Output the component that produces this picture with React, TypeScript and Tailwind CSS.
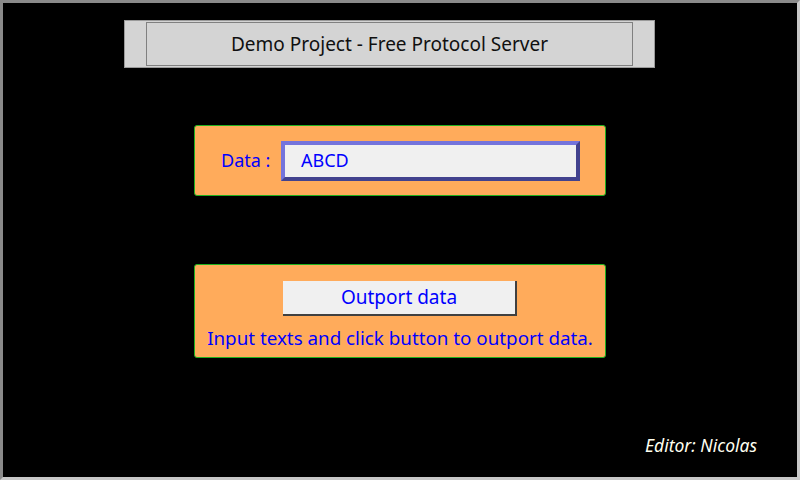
import React from "react";

export default function App() {
  const font = { fontFamily: '"Comic Sans MS", "Noto Sans", "DejaVu Sans", sans-serif' };
  return (
    <div
      className="w-[800px] h-[480px] bg-black flex flex-col border-[3px] border-t-[#8a8a8a] border-l-[#8a8a8a] border-b-[#c8c8c8] border-r-[#c8c8c8] box-border"
      style={font}
    >
      <div className="ml-[121px] mt-[17px] w-[531px] h-[48px] bg-[#d4d4d4] border border-[#9a9a9a] flex items-center justify-center">
        <div className="w-[487px] h-[44px] border border-[#808080] flex items-center justify-center text-[19px] text-[#101010]">
          Demo Project - Free Protocol Server
        </div>
      </div>

      <div className="ml-[191px] mt-[57px] w-[412px] h-[71px] bg-[#ffab5b] border border-[#1fb01f] rounded-[3px] flex items-center">
        <span className="ml-[26px] w-[60px] text-[18px] text-[#0000ff]">Data :</span>
        <div className="w-[299px] h-[40px] bg-[#f0f0f0] border-[4px] border-t-[#7474dc] border-l-[#7474dc] border-b-[#42428e] border-r-[#42428e] flex items-center">
          <span className="ml-[16px] text-[18px] text-[#0000ff]">ABCD</span>
        </div>
      </div>

      <div className="ml-[191px] mt-[68px] w-[412px] h-[94px] bg-[#ffab5b] border border-[#1fb01f] rounded-[3px] flex flex-col items-center">
        <div className="mt-[16px] w-[234px] h-[35px] bg-[#f0f0f0] border-r-2 border-b-2 border-[#404040] flex items-center justify-center text-[19px] text-[#0000ff]">
          Outport data
        </div>
        <div className="mt-[8px] text-[18.8px] text-[#0000ff] whitespace-nowrap">
          Input texts and click button to outport data.
        </div>
      </div>

      <div className="mt-auto mb-[19px] self-end mr-[40px] italic text-[17.5px] text-[#fffff0]">
        Editor: Nicolas
      </div>
    </div>
  );
}
